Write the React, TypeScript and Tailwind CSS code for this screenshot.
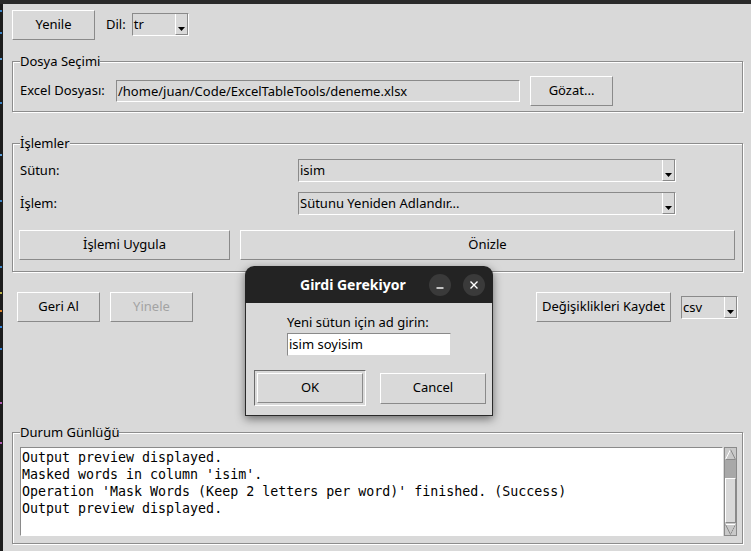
import { FC, ReactNode } from "react";

const raised =
    "border border-t-white border-l-white border-b-[#8a8a8a] border-r-[#8a8a8a]";
const sunken =
    "border border-t-[#8a8a8a] border-l-[#8a8a8a] border-b-white border-r-white";

const Btn: FC<{ label: string; className?: string; disabled?: boolean }> = ({
    label,
    className = "",
    disabled,
}) => (
    <button
        type="button"
        className={`${raised} shrink-0 flex items-center justify-center bg-[#d9d9d9] h-[30px] ${
            disabled ? "text-[#a3a3a3]" : "text-black"
        } ${className}`}
    >
        {label}
    </button>
);

const Arrow = () => (
    <svg width="7" height="4" viewBox="0 0 7 4">
        <polygon points="0,0 7,0 3.5,4" fill="#000" />
    </svg>
);

const Combo: FC<{ value: string; className?: string }> = ({
    value,
    className = "",
}) => (
    <div className={`${sunken} shrink-0 flex h-[23px] bg-[#d9d9d9] ${className}`}>
        <span className="flex-1 pl-[1px] leading-[21px] truncate">{value}</span>
        <div className="w-[13px] flex items-end justify-center pb-[3px] border-l border-l-white border-r border-r-[#8a8a8a] border-b border-b-[#8a8a8a]">
            <Arrow />
        </div>
    </div>
);

const Group: FC<{ title: string; className?: string; children: ReactNode }> = ({
    title,
    className = "",
    children,
}) => (
    <fieldset
        className={`border border-[#8c8c8c] shadow-[inset_1px_1px_0_#fff,1px_1px_0_#fff] px-[7px] min-w-0 ${className}`}
    >
        <legend className="leading-[18px] bg-[#d9d9d9]">{title}</legend>
        {children}
    </fieldset>
);

const ScrollArrow: FC<{ up?: boolean }> = ({ up }) => (
    <div className="h-[12px] flex items-center justify-center">
        <svg width="11" height="11" viewBox="0 0 11 11">
            {up ? (
                <>
                    <polyline points="0.5,10.5 5.5,0.5" fill="none" stroke="#fff" />
                    <polyline points="5.5,0.5 10.5,10.5 0.5,10.5" fill="none" stroke="#8a8a8a" />
                </>
            ) : (
                <>
                    <polyline points="0.5,0.5 10.5,0.5 5.5,10.5" fill="none" stroke="#fff" />
                    <polyline points="5.5,10.5 0.5,0.5" fill="none" stroke="#8a8a8a" />
                    <polyline points="5.5,10.5 10.5,0.5" fill="none" stroke="#8a8a8a" />
                </>
            )}
        </svg>
    </div>
);

const logLines = [
    "Output preview displayed.",
    "Masked words in column 'isim'.",
    "Operation 'Mask Words (Keep 2 letters per word)' finished. (Success)",
    "Output preview displayed.",
];

const stripDots = [
    { top: 6, color: "bg-[#3b82c4]" },
    { top: 28, color: "bg-[#3b82c4]" },
    { top: 54, color: "bg-[#5a9bd5]" },
    { top: 98, color: "bg-[#3b82c4]" },
    { top: 150, color: "bg-[#5a9bd5]" },
    { top: 196, color: "bg-[#3b82c4]" },
    { top: 262, color: "bg-[#3b82c4]" },
    { top: 288, color: "bg-[#b8b04a]" },
    { top: 306, color: "bg-[#d9822b]" },
    { top: 322, color: "bg-[#2f7fd8]" },
    { top: 344, color: "bg-[#2f7fd8]" },
    { top: 398, color: "bg-[#b05cb0]" },
    { top: 438, color: "bg-[#b05cb0]" },
];

export default function App() {
    return (
        <div className="w-[751px] h-[551px] bg-[#d9d9d9] flex flex-col overflow-hidden relative font-['Noto_Sans',sans-serif] text-[13px] text-black">
            <div className="h-[4px] shrink-0 bg-[#2a2a2a]" />
            <div className="flex flex-1 min-h-0">
                <div className="w-[3px] shrink-0 bg-[#1c1c1c] relative">
                    {stripDots.map((d, i) => (
                        <span
                            key={i}
                            className={`absolute left-0 w-[2px] h-[2px] ${d.color}`}
                            style={{ top: d.top }}
                        />
                    ))}
                </div>
                <div className="flex-1 flex flex-col pl-[9px] pr-[10px]">
                    {/* toolbar */}
                    <div className="flex items-center pt-[6px]">
                        <Btn label="Yenile" className="w-[83px]" />
                        <span className="ml-[11px]">Dil:</span>
                        <Combo value="tr" className="ml-[6px] w-[57px] mt-[-2px]" />
                    </div>

                    {/* file */}
                    <Group title="Dosya Seçimi" className="mt-[12px] pb-[5px]">
                        <div className="flex items-center h-[30px] mt-[6px]">
                            <span className="w-[96px] shrink-0">Excel Dosyası:</span>
                            <div className={`${sunken} w-[404px] h-[22px] leading-[20px] pl-[1px]`}>
                                /home/juan/Code/ExcelTableTools/deneme.xlsx
                            </div>
                            <Btn label="Gözat..." className="ml-[10px] w-[83px]" />
                        </div>
                    </Group>

                    {/* operations */}
                    <Group title="İşlemler" className="mt-[22px] pb-[11px]">
                        <div className="flex items-center h-[23px] mt-[7px]">
                            <span className="w-[278px] shrink-0">Sütun:</span>
                            <Combo value="isim" className="w-[378px]" />
                        </div>
                        <div className="flex items-center h-[23px] mt-[10px]">
                            <span className="w-[278px] shrink-0">İşlem:</span>
                            <Combo value="Sütunu Yeniden Adlandır..." className="w-[378px]" />
                        </div>
                        <div className="flex mt-[15px] ml-[-1px]">
                            <Btn label="İşlemi Uygula" className="w-[211px]" />
                            <Btn label="Önizle" className="ml-[10px] w-[495px]" />
                        </div>
                    </Group>

                    {/* actions */}
                    <div className="flex items-center h-[30px] mt-[20px] pl-[5px] pr-[5px]">
                        <Btn label="Geri Al" className="w-[83px]" />
                        <Btn label="Yinele" disabled className="ml-[10px] w-[83px]" />
                        <div className="flex-1" />
                        <Btn label="Değişiklikleri Kaydet" className="w-[135px]" />
                        <Combo value="csv" className="ml-[10px] w-[57px]" />
                    </div>

                    {/* log */}
                    <Group title="Durum Günlüğü" className="mt-[101px] pb-[7px]">
                        <div className="flex h-[89px] mt-[6px] mr-[-2px]">
                            <div className={`${sunken} flex-1 bg-white pl-[1px] pt-[1px] font-['DejaVu_Sans_Mono',monospace] text-[13.3px] leading-[17px] whitespace-pre overflow-hidden`}>
                                {logLines.map((l, i) => (
                                    <div key={i}>{l}</div>
                                ))}
                            </div>
                            <div className="w-[13px] ml-[1px] flex flex-col border border-[#8a8a8a] bg-[#c9c9c9]">
                                <ScrollArrow up />
                                <div className="h-[18px] bg-[#a8a8a8]" />
                                <div className={`${raised} flex-1 bg-[#d9d9d9]`} />
                                <ScrollArrow />
                            </div>
                        </div>
                    </Group>
                </div>
            </div>

            {/* dialog */}
            <div className="absolute left-[245px] top-[266px] w-[248px] h-[150px] flex flex-col rounded-t-[9px] shadow-[0_3px_10px_rgba(0,0,0,0.5)]">
                <div className="h-[37px] shrink-0 flex items-center bg-[#232323] rounded-t-[9px] pl-[55px] pr-[8px]">
                    <span className="text-white font-bold text-[14px]">Girdi Gerekiyor</span>
                    <div className="ml-auto flex items-center gap-[12px]">
                        <div className="w-[22px] h-[22px] rounded-full bg-[#3a3a3a] flex items-center justify-center">
                            <svg width="10" height="10" viewBox="0 0 10 10">
                                <line x1="1.5" y1="8" x2="8.5" y2="8" stroke="#fff" strokeWidth="1.4" />
                            </svg>
                        </div>
                        <div className="w-[22px] h-[22px] rounded-full bg-[#3a3a3a] flex items-center justify-center">
                            <svg width="10" height="10" viewBox="0 0 10 10">
                                <path d="M1.5 1.5 L8.5 8.5 M8.5 1.5 L1.5 8.5" stroke="#fff" strokeWidth="1.4" />
                            </svg>
                        </div>
                    </div>
                </div>
                <div className="flex-1 bg-[#d9d9d9] border-x border-b border-[#2a2a2a] flex flex-col">
                    <span className="ml-[41px] mt-[10px] leading-[18px]">Yeni sütun için ad girin:</span>
                    <div className="ml-[41px] mt-[2px] w-[164px] h-[23px] bg-white border border-t-[#8a8a8a] border-l-[#8a8a8a] border-b-[#d9d9d9] border-r-[#d9d9d9] leading-[21px] pl-[1px]">
                        isim soyisim
                    </div>
                    <div className="flex items-center mt-[14px] ml-[8px]">
                        <div className="w-[112px] h-[36px] border border-t-[#6a6a6a] border-l-[#6a6a6a] border-b-white border-r-white p-[2px] flex">
                            <button type="button" className={`${raised} flex-1 bg-[#d9d9d9]`}>
                                OK
                            </button>
                        </div>
                        <Btn label="Cancel" className="ml-[14px] w-[106px] h-[31px]" />
                    </div>
                </div>
            </div>
        </div>
    );
}
